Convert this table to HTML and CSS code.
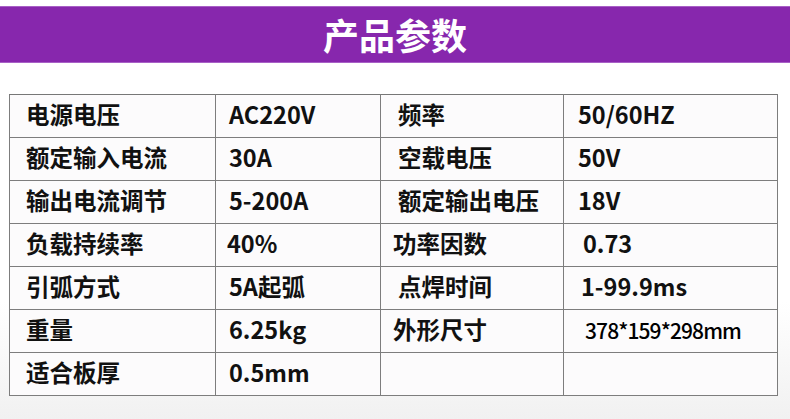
FILE: index.html
```html
<!DOCTYPE html>
<html lang="zh-CN">
<head>
<meta charset="utf-8">
<title>产品参数</title>
<link rel="stylesheet" href="styles.css">
</head>
<body>
<div class="page">
  <header class="banner"><h1 class="banner-title">产品参数</h1></header>
  <table class="spec">
    <colgroup>
      <col class="c1"><col class="c2"><col class="c3"><col class="c4">
    </colgroup>
    <tbody>
      <tr><td class="k1">电源电压</td><td class="v1">AC220V</td><td class="k2">频率</td><td class="v2">50/60HZ</td></tr>
      <tr><td class="k1">额定输入电流</td><td class="v1">30A</td><td class="k2">空载电压</td><td class="v2">50V</td></tr>
      <tr><td class="k1">输出电流调节</td><td class="v1">5-200A</td><td class="k2">额定输出电压</td><td class="v2">18V</td></tr>
      <tr><td class="k1">负载持续率</td><td class="v1 nudge-l">40%</td><td class="k2 nudge-l">功率因数</td><td class="v2 nudge-r">0.73</td></tr>
      <tr><td class="k1">引弧方式</td><td class="v1">5A起弧</td><td class="k2">点焊时间</td><td class="v2 nudge-s">1-99.9ms</td></tr>
      <tr><td class="k1">重量</td><td class="v1">6.25kg</td><td class="k2 nudge-l">外形尺寸</td><td class="v2 small">378*159*298mm</td></tr>
      <tr><td class="k1">适合板厚</td><td class="v1">0.5mm</td><td class="k2"></td><td class="v2"></td></tr>
    </tbody>
  </table>
</div>
</body>
</html>
```

FILE: styles.css
```css
html, body {
  margin: 0;
  padding: 0;
}
body {
  width: 790px;
  height: 419px;
  overflow: hidden;
  background: linear-gradient(to bottom, #ffffff 0%, #ffffff 72%, #f1f1f1 100%);
  font-family: "Noto Sans CJK SC", "Noto Sans", sans-serif;
  color: #111111;
}
.page {
  padding-top: 6px;
}
.banner {
  height: 55px;
  background: #8727ad;
  border-top: 1px solid #a860c6;
  border-bottom: 1px solid #a860c6;
  display: flex;
  align-items: center;
  justify-content: center;
}
.banner-title {
  margin: 0;
  color: #ffffff;
  font-size: 36px;
  font-weight: 700;
  line-height: 1;
  letter-spacing: 0;
  padding-bottom: 2px;
}
.spec {
  margin: 31px 0 0 9px;
  border-collapse: collapse;
  table-layout: fixed;
  width: 768px;
  background: #fcfbfc;
}
.c1 { width: 206px; }
.c2 { width: 165px; }
.c3 { width: 183px; }
.c4 { width: 214px; }
.spec td {
  border: 1px solid #7d7d7d;
  height: 43px;
  padding: 0 0 2px 0;
  box-sizing: border-box;
  font-size: 23.5px;
  font-weight: 700;
  line-height: 1;
  white-space: nowrap;
  vertical-align: middle;
}
.spec tr:first-child td { border-top-color: #777777; }
.k1 { padding-left: 16px !important; }
.v1 { padding-left: 13px !important; }
.k2 { padding-left: 17px !important; }
.v2 { padding-left: 14px !important; }
.spec td.nudge-l { padding-left: 12px !important; }
.spec td.v1.nudge-l { padding-left: 11px !important; }
.spec td.nudge-r { padding-left: 19px !important; }
.spec td.nudge-s { padding-left: 17px !important; }
.spec td.small {
  font-size: 21px;
  font-weight: 500;
  letter-spacing: -0.9px;
  color: #000000;
  padding-left: 21px !important;
}
```
